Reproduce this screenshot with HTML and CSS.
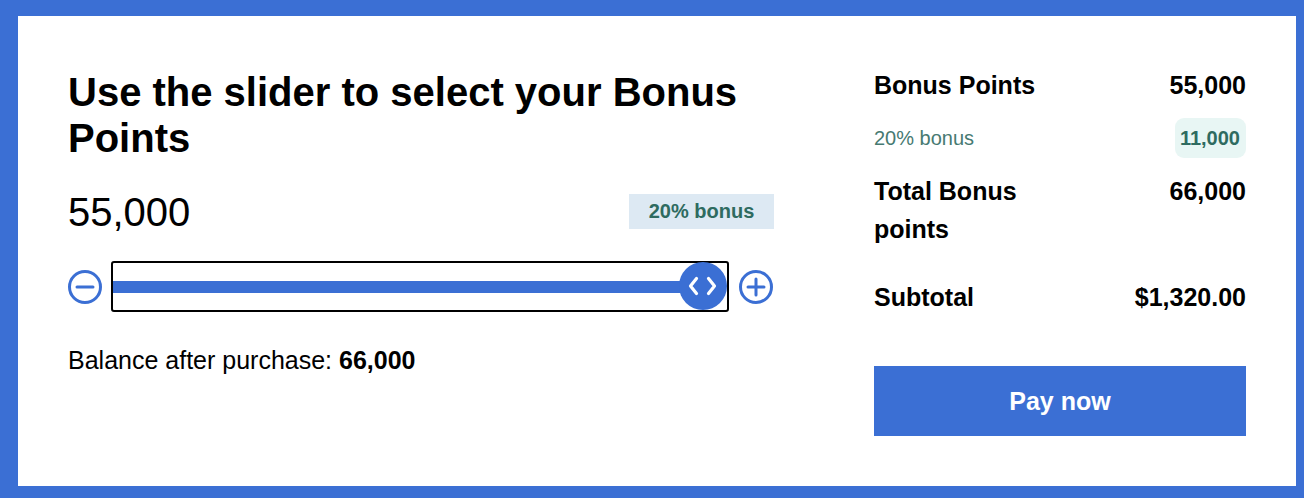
FILE: index.html
```html
<!DOCTYPE html>
<html lang="en">
<head>
<meta charset="utf-8">
<title>Bonus Points</title>
<link rel="stylesheet" href="styles.css">
</head>
<body>
<main class="card">
  <section class="picker">
    <h1 class="title">Use the slider to select your Bonus Points</h1>
    <div class="amount-row">
      <span class="amount">55,000</span>
      <span class="badge">20% bonus</span>
    </div>
    <div class="slider-row">
      <button class="step" aria-label="Decrease">
        <svg width="36" height="36" viewBox="0 0 36 36"><circle cx="18" cy="18" r="15.5" fill="none" stroke="#3b6fd4" stroke-width="3"/><line x1="10" y1="18" x2="26" y2="18" stroke="#3b6fd4" stroke-width="3" stroke-linecap="round"/></svg>
      </button>
      <div class="slider">
        <div class="track"></div>
        <div class="thumb">
          <svg width="48" height="48" viewBox="0 0 48 48"><polyline points="17.5,16.5 11.5,24 17.5,31.5" fill="none" stroke="#fff" stroke-width="3.2" stroke-linecap="round" stroke-linejoin="round"/><polyline points="29.5,16.5 35.5,24 29.5,31.5" fill="none" stroke="#fff" stroke-width="3.2" stroke-linecap="round" stroke-linejoin="round"/></svg>
        </div>
      </div>
      <button class="step" aria-label="Increase">
        <svg width="36" height="36" viewBox="0 0 36 36"><circle cx="18" cy="18" r="15.5" fill="none" stroke="#3b6fd4" stroke-width="3"/><line x1="10" y1="18" x2="26" y2="18" stroke="#3b6fd4" stroke-width="3" stroke-linecap="round"/><line x1="18" y1="10" x2="18" y2="26" stroke="#3b6fd4" stroke-width="3" stroke-linecap="round"/></svg>
      </button>
    </div>
    <p class="balance">Balance after purchase: <strong>66,000</strong></p>
  </section>
  <aside class="summary">
    <div class="row r-points"><span class="label">Bonus Points</span><span class="value">55,000</span></div>
    <div class="row r-bonus"><span class="label light">20% bonus</span><span class="pill">11,000</span></div>
    <div class="row r-total"><span class="label">Total Bonus points</span><span class="value">66,000</span></div>
    <div class="row r-sub"><span class="label">Subtotal</span><span class="value">$1,320.00</span></div>
    <button class="pay">Pay now</button>
  </aside>
</main>
</body>
</html>
```
FILE: styles.css
```css
html, body {
  margin: 0;
  padding: 0;
  height: 100%;
}
body {
  background: #3b6fd4;
  font-family: "Liberation Sans", Arial, sans-serif;
  color: #000;
  padding: 16px 8px 12px 18px;
  box-sizing: border-box;
}
.card {
  background: #fff;
  height: 470px;
  box-sizing: border-box;
  padding: 50px 50px 0 50px;
  display: flex;
  gap: 100px;
}
.picker {
  width: 706px;
  flex: none;
  padding-top: 3px;
}
.title {
  margin: 0;
  font-size: 40px;
  line-height: 46px;
  font-weight: bold;
}
.amount-row {
  display: flex;
  justify-content: space-between;
  align-items: center;
  margin-top: 27px;
  height: 48px;
}
.amount {
  font-size: 40px;
  line-height: 48px;
}
.badge {
  background: #dde9f3;
  color: #2e6b60;
  font-weight: bold;
  font-size: 20px;
  width: 145px;
  height: 35px;
  line-height: 35px;
  text-align: center;
  margin-top: -2px;
}
.slider-row {
  margin-top: 25px;
  display: flex;
  align-items: center;
  gap: 9px;
}
.step {
  border: 0;
  background: none;
  padding: 0;
  width: 36px;
  height: 36px;
  display: flex;
}
.step:first-child {
  margin-left: -1px;
  margin-right: -1px;
}
.slider {
  position: relative;
  width: 618px;
  height: 51px;
  box-sizing: border-box;
  border: 2px solid #000;
  border-radius: 3px;
  display: flex;
  align-items: center;
}
.track {
  height: 12px;
  background: #3b6fd4;
  width: 590px;
}
.thumb {
  position: absolute;
  left: 566px;
  top: -1px;
  width: 48px;
  height: 48px;
  border-radius: 50%;
  background: #3b6fd4;
}
.balance {
  margin: 33px 0 0;
  font-size: 25px;
  line-height: 30px;
}
.summary {
  width: 372px;
  flex: none;
}
.row {
  display: grid;
  grid-template-columns: 1fr 1fr;
  align-items: start;
  font-size: 25px;
  line-height: 38px;
  font-weight: bold;
}
.value {
  text-align: right;
}
.r-bonus {
  margin-top: 14px;
  align-items: center;
  height: 40px;
}
.light {
  font-weight: normal;
  font-size: 20px;
  color: #477a72;
}
.pill {
  justify-self: end;
  background: #e8f6f4;
  color: #2e6b60;
  font-size: 20px;
  line-height: 40px;
  padding: 0 6px 0 5px;
  border-radius: 9px;
}
.r-total {
  margin-top: 14px;
}
.r-sub {
  margin-top: 30px;
}
.pay {
  margin-top: 50px;
  width: 100%;
  height: 70px;
  border: 0;
  background: #3b6fd4;
  color: #fff;
  font-family: "Liberation Sans", Arial, sans-serif;
  font-weight: bold;
  font-size: 25px;
}
```
